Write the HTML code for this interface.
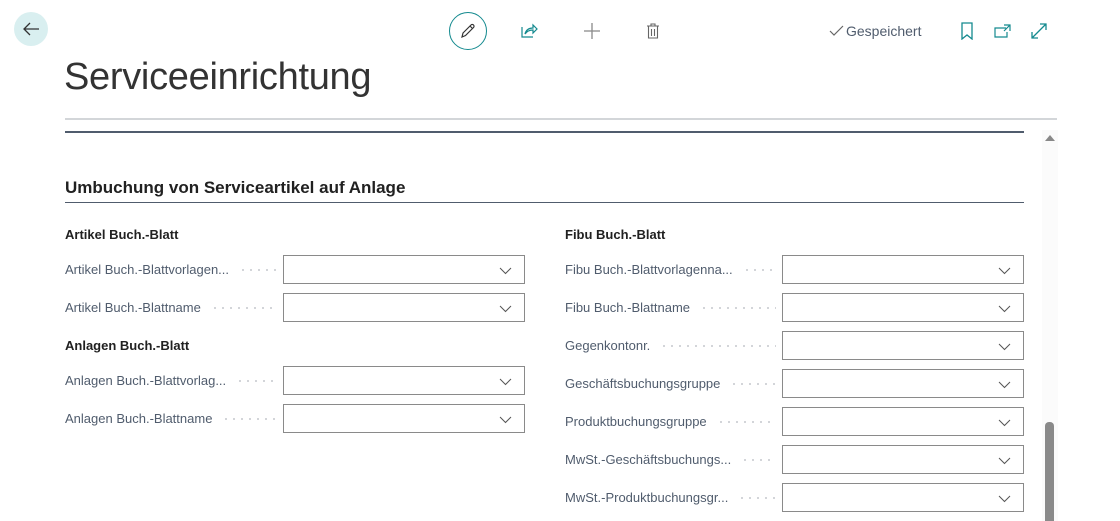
<!DOCTYPE html>
<html><head><meta charset="utf-8"><style>
*{margin:0;padding:0;box-sizing:border-box}
body{width:1120px;height:521px;background:#fff;font-family:"Liberation Sans",sans-serif;position:relative;overflow:hidden;color:#212121}
.a{position:absolute}
.title{left:64px;top:56px;font-size:38px;font-weight:300;color:#333;letter-spacing:-0.3px;font-family:"Liberation Sans",sans-serif}
.row{position:absolute;display:flex;align-items:center;height:29px;font-size:13px;color:#505c6d}
.row .l{white-space:nowrap}
.row .d{flex:1;height:2px;margin:0 6px 0 10px;background:radial-gradient(circle,#c4c7cc 0.8px,transparent 1px) 0 0/8px 2px repeat-x}
.row .box{width:242px;height:29px;border:1px solid #8a8a8a;position:relative}
.row .box svg{position:absolute;right:12px;top:11px}
.h{position:absolute;font-size:13px;font-weight:bold;color:#212121}
</style></head><body>
<div class="a" style="left:14px;top:12px;width:34px;height:34px;border-radius:50%;background:#d9eff0"></div>
<svg class="a" style="left:22px;top:21px" width="18" height="16"><path d="M17 8H2M8 2L2 8l6 6" stroke="#333" stroke-width="1.3" fill="none"/></svg>
<div class="a" style="left:449px;top:12px;width:38px;height:38px;border-radius:50%;border:1.3px solid #148a8f"></div>
<svg class="a" style="left:459px;top:22px" width="18" height="18"><path d="M3 15l1-4 8-8a1.5 1.5 0 0 1 2.5 2.5l-8 8z M11 4l2.5 2.5" stroke="#333" stroke-width="1.2" fill="none"/></svg>
<svg class="a" style="left:520px;top:22px" width="18" height="18"><path d="M2 5v10h11 M5 12c1-4 4-6 8-6V3l4 4-4 4V8c-3 0-6 1-8 4z" stroke="#148a8f" stroke-width="1.2" fill="none"/></svg>
<svg class="a" style="left:583px;top:22px" width="18" height="18"><path d="M9 1v16M1 9h16" stroke="#888" stroke-width="1.3"/></svg>
<svg class="a" style="left:645px;top:22px" width="16" height="18"><path d="M2 4h12M6 4V2h4v2M3.5 4v12h9V4M6.5 7v7M9.5 7v7" stroke="#666" stroke-width="1.1" fill="none"/></svg>
<svg class="a" style="left:829px;top:25px" width="16" height="12"><path d="M1 6l4 4 9-9" stroke="#666" stroke-width="1.2" fill="none"/></svg>
<div class="a" style="left:846px;top:23px;font-size:14px;color:#505c6d">Gespeichert</div>
<svg class="a" style="left:960px;top:22px" width="14" height="18"><path d="M2 1h10v16l-5-4-5 4z" stroke="#148a8f" stroke-width="1.3" fill="none"/></svg>
<svg class="a" style="left:994px;top:24px" width="18" height="14"><path d="M12 4H1v9h12V8M10 1h6v6M16 1l-6 6" stroke="#148a8f" stroke-width="1.2" fill="none"/></svg>
<svg class="a" style="left:1030px;top:22px" width="18" height="18"><path d="M2 16L16 2M2 10v6h6M10 2h6v6" stroke="#148a8f" stroke-width="1.3" fill="none"/></svg>

<div class="a title">Serviceeinrichtung</div>
<div class="a" style="left:65px;top:118px;width:992px;height:2px;background:#d3d6d9"></div>
<div class="a" style="left:65px;top:131px;width:959px;height:2px;background:#505c6d"></div>
<div class="a" style="left:1042px;top:130px;width:16px;height:391px;background:#fbfbfb"></div>
<svg class="a" style="left:1044px;top:134px" width="12" height="8"><path d="M1 7L6 1l5 6z" fill="#888"/></svg>
<div class="a" style="left:1045px;top:422px;width:9px;height:99px;background:#8a8a8a;border-radius:4px 4px 0 0"></div>

<div class="a" style="left:65px;top:178px;font-size:17px;font-weight:bold;color:#212121">Umbuchung von Serviceartikel auf Anlage</div>
<div class="a" style="left:65px;top:202px;width:959px;height:1px;background:#505c6d"></div>

<div class="h" style="left:65px;top:227px">Artikel Buch.-Blatt</div>
<div class="row" style="left:65px;top:255px;width:460px"><span class="l">Artikel Buch.-Blattvorlagen...</span><span class="d"></span><span class="box"><svg width="13" height="8"><path d="M1 1l5.5 5.5L12 1" stroke="#555" fill="none"/></svg></span></div>
<div class="row" style="left:65px;top:293px;width:460px"><span class="l">Artikel Buch.-Blattname</span><span class="d"></span><span class="box"><svg width="13" height="8"><path d="M1 1l5.5 5.5L12 1" stroke="#555" fill="none"/></svg></span></div>
<div class="h" style="left:65px;top:338px">Anlagen Buch.-Blatt</div>
<div class="row" style="left:65px;top:366px;width:460px"><span class="l">Anlagen Buch.-Blattvorlag...</span><span class="d"></span><span class="box"><svg width="13" height="8"><path d="M1 1l5.5 5.5L12 1" stroke="#555" fill="none"/></svg></span></div>
<div class="row" style="left:65px;top:404px;width:460px"><span class="l">Anlagen Buch.-Blattname</span><span class="d"></span><span class="box"><svg width="13" height="8"><path d="M1 1l5.5 5.5L12 1" stroke="#555" fill="none"/></svg></span></div>

<div class="h" style="left:565px;top:227px">Fibu Buch.-Blatt</div>
<div class="row" style="left:565px;top:255px;width:459px"><span class="l">Fibu Buch.-Blattvorlagenna...</span><span class="d"></span><span class="box"><svg width="13" height="8"><path d="M1 1l5.5 5.5L12 1" stroke="#555" fill="none"/></svg></span></div>
<div class="row" style="left:565px;top:293px;width:459px"><span class="l">Fibu Buch.-Blattname</span><span class="d"></span><span class="box"><svg width="13" height="8"><path d="M1 1l5.5 5.5L12 1" stroke="#555" fill="none"/></svg></span></div>
<div class="row" style="left:565px;top:331px;width:459px"><span class="l">Gegenkontonr.</span><span class="d"></span><span class="box"><svg width="13" height="8"><path d="M1 1l5.5 5.5L12 1" stroke="#555" fill="none"/></svg></span></div>
<div class="row" style="left:565px;top:369px;width:459px"><span class="l">Geschäftsbuchungsgruppe</span><span class="d"></span><span class="box"><svg width="13" height="8"><path d="M1 1l5.5 5.5L12 1" stroke="#555" fill="none"/></svg></span></div>
<div class="row" style="left:565px;top:407px;width:459px"><span class="l">Produktbuchungsgruppe</span><span class="d"></span><span class="box"><svg width="13" height="8"><path d="M1 1l5.5 5.5L12 1" stroke="#555" fill="none"/></svg></span></div>
<div class="row" style="left:565px;top:445px;width:459px"><span class="l">MwSt.-Geschäftsbuchungs...</span><span class="d"></span><span class="box"><svg width="13" height="8"><path d="M1 1l5.5 5.5L12 1" stroke="#555" fill="none"/></svg></span></div>
<div class="row" style="left:565px;top:483px;width:459px"><span class="l">MwSt.-Produktbuchungsgr...</span><span class="d"></span><span class="box"><svg width="13" height="8"><path d="M1 1l5.5 5.5L12 1" stroke="#555" fill="none"/></svg></span></div>
</body></html>
